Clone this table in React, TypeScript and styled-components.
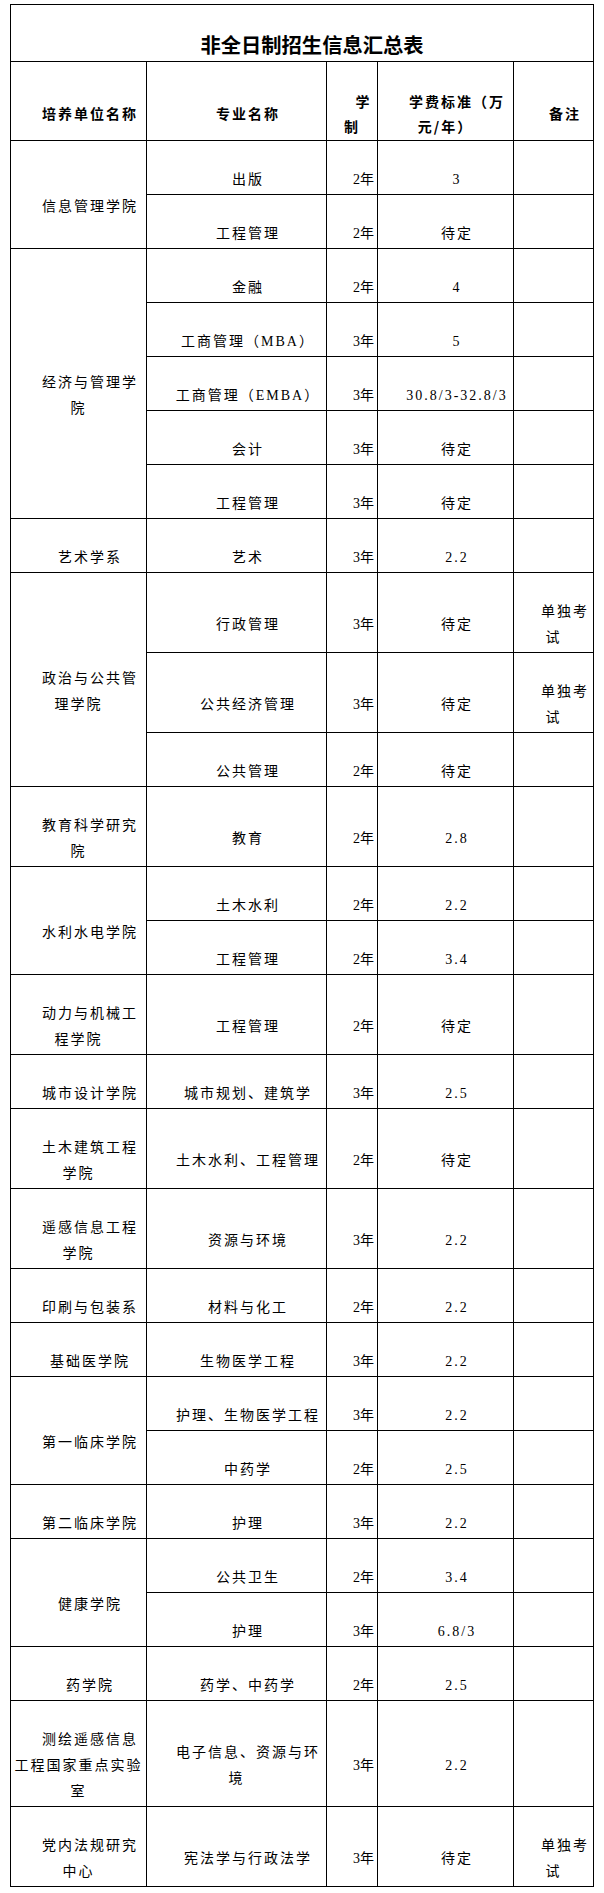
import React from "react";
import styled, { createGlobalStyle } from "styled-components";

const GlobalStyle = createGlobalStyle`
  html, body {
    margin: 0;
    padding: 0;
    background: #ffffff;
  }
  body {
    font-family: "Liberation Serif", "Noto Sans CJK SC", serif;
    color: #000000;
  }
`;

const Page = styled.div`
  padding: 4px 0 0 10px;
`;

const Table = styled.table`
  border-collapse: collapse;
  table-layout: fixed;
  width: 584px;
  font-family: "Liberation Serif", "Noto Sans CJK SC", serif;
  color: #000;
`;

const Col = styled.col<{ $w: number }>`
  width: ${(p) => p.$w}px;
`;

const Row = styled.tr<{ $h: number }>`
  height: ${(p) => p.$h}px;
`;

const Cell = styled.td`
  border: 1px solid #000;
  padding: 26px 3px 1px;
  text-align: center;
  vertical-align: middle;
  text-indent: 23px;
  font-size: 14px;
  line-height: 26px;
  letter-spacing: 2px;
  font-weight: 400;
  word-break: break-all;
`;

const YearCell = styled(Cell)`
  letter-spacing: 0;
  white-space: nowrap;
`;

const HeadCell = styled.th`
  border: 1px solid #000;
  padding: 26px 3px 1px;
  text-align: center;
  vertical-align: middle;
  text-indent: 23px;
  font-size: 14px;
  line-height: 25px;
  letter-spacing: 2px;
  font-weight: 700;
  font-family: "Noto Sans CJK SC", sans-serif;
  word-break: break-all;
`;

const TitleCell = styled.th`
  border: 1px solid #000;
  padding: 22px 3px 1px;
  text-align: center;
  vertical-align: middle;
  text-indent: 20px;
  font-size: 20.3px;
  line-height: 26px;
  font-weight: 700;
  font-family: "Noto Sans CJK SC", sans-serif;
  white-space: nowrap;
`;

type Item = { major: string; years: string; fee: string; note?: string; h: number };
type Group = { unit: string; items: Item[] };

const NOTE = "单独考试";

const groups: Group[] = [
  {
    unit: "信息管理学院",
    items: [
      { major: "出版", years: "2年", fee: "3", h: 54 },
      { major: "工程管理", years: "2年", fee: "待定", h: 54 },
    ],
  },
  {
    unit: "经济与管理学院",
    items: [
      { major: "金融", years: "2年", fee: "4", h: 54 },
      { major: "工商管理（MBA）", years: "3年", fee: "5", h: 54 },
      { major: "工商管理（EMBA）", years: "3年", fee: "30.8/3-32.8/3", h: 54 },
      { major: "会计", years: "3年", fee: "待定", h: 54 },
      { major: "工程管理", years: "3年", fee: "待定", h: 54 },
    ],
  },
  { unit: "艺术学系", items: [{ major: "艺术", years: "3年", fee: "2.2", h: 54 }] },
  {
    unit: "政治与公共管理学院",
    items: [
      { major: "行政管理", years: "3年", fee: "待定", note: NOTE, h: 80 },
      { major: "公共经济管理", years: "3年", fee: "待定", note: NOTE, h: 80 },
      { major: "公共管理", years: "2年", fee: "待定", h: 54 },
    ],
  },
  { unit: "教育科学研究院", items: [{ major: "教育", years: "2年", fee: "2.8", h: 80 }] },
  {
    unit: "水利水电学院",
    items: [
      { major: "土木水利", years: "2年", fee: "2.2", h: 54 },
      { major: "工程管理", years: "2年", fee: "3.4", h: 54 },
    ],
  },
  { unit: "动力与机械工程学院", items: [{ major: "工程管理", years: "2年", fee: "待定", h: 80 }] },
  { unit: "城市设计学院", items: [{ major: "城市规划、建筑学", years: "3年", fee: "2.5", h: 54 }] },
  { unit: "土木建筑工程学院", items: [{ major: "土木水利、工程管理", years: "2年", fee: "待定", h: 80 }] },
  { unit: "遥感信息工程学院", items: [{ major: "资源与环境", years: "3年", fee: "2.2", h: 80 }] },
  { unit: "印刷与包装系", items: [{ major: "材料与化工", years: "2年", fee: "2.2", h: 54 }] },
  { unit: "基础医学院", items: [{ major: "生物医学工程", years: "3年", fee: "2.2", h: 54 }] },
  {
    unit: "第一临床学院",
    items: [
      { major: "护理、生物医学工程", years: "3年", fee: "2.2", h: 54 },
      { major: "中药学", years: "2年", fee: "2.5", h: 54 },
    ],
  },
  { unit: "第二临床学院", items: [{ major: "护理", years: "3年", fee: "2.2", h: 54 }] },
  {
    unit: "健康学院",
    items: [
      { major: "公共卫生", years: "2年", fee: "3.4", h: 54 },
      { major: "护理", years: "3年", fee: "6.8/3", h: 54 },
    ],
  },
  { unit: "药学院", items: [{ major: "药学、中药学", years: "2年", fee: "2.5", h: 54 }] },
  {
    unit: "测绘遥感信息工程国家重点实验室",
    items: [{ major: "电子信息、资源与环境", years: "3年", fee: "2.2", h: 106 }],
  },
  {
    unit: "党内法规研究中心",
    items: [{ major: "宪法学与行政法学", years: "3年", fee: "待定", note: NOTE, h: 80 }],
  },
];

const widths = [136, 180, 51, 136, 80];

export default function App() {
  return (
    <>
      <GlobalStyle />
      <Page>
        <Table>
          <colgroup>
            {widths.map((w, i) => (
              <Col key={i} $w={w} />
            ))}
          </colgroup>
          <thead>
            <Row $h={57}>
              <TitleCell colSpan={5}>非全日制招生信息汇总表</TitleCell>
            </Row>
            <Row $h={79}>
              <HeadCell>培养单位名称</HeadCell>
              <HeadCell>专业名称</HeadCell>
              <HeadCell>学制</HeadCell>
              <HeadCell>学费标准（万元/年）</HeadCell>
              <HeadCell>备注</HeadCell>
            </Row>
          </thead>
          <tbody>
            {groups.map((g) =>
              g.items.map((it, i) => (
                <Row key={g.unit + i} $h={it.h}>
                  {i === 0 && <Cell rowSpan={g.items.length}>{g.unit}</Cell>}
                  <Cell>{it.major}</Cell>
                  <YearCell>{it.years}</YearCell>
                  <Cell>{it.fee}</Cell>
                  <Cell>{it.note ?? ""}</Cell>
                </Row>
              ))
            )}
          </tbody>
        </Table>
      </Page>
    </>
  );
}
